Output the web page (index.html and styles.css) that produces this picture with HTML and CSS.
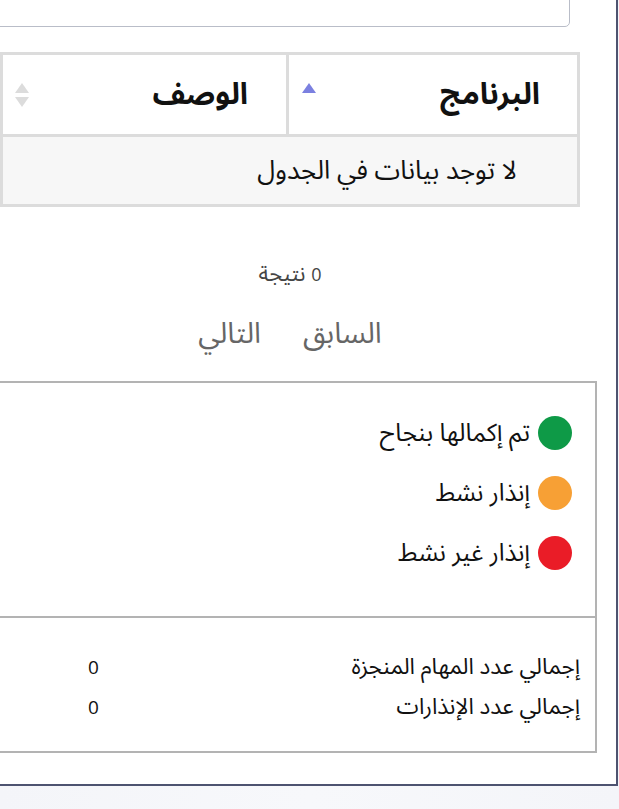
FILE: index.html
```html
<!DOCTYPE html>
<html lang="ar" dir="rtl">
<head>
<meta charset="utf-8">
<link rel="stylesheet" href="styles.css">
</head>
<body>
<div class="card">
  <div class="search-box"></div>
  <div class="table-wrap">
    <table class="data-table">
      <thead>
        <tr>
          <th class="col-program"><div class="th-inner"><span>البرنامج</span>
            <svg class="sort" width="16" height="26" viewBox="0 0 16 26"><path d="M8 1 L15 11 L1 11 Z" fill="#7b80e0"/></svg></div></th>
          <th class="col-desc"><div class="th-inner"><span>الوصف</span>
            <svg class="sort" width="16" height="26" viewBox="0 0 16 26"><path d="M8 1 L15 11 L1 11 Z" fill="#dcdcdc"/><path d="M8 25 L15 15 L1 15 Z" fill="#dcdcdc"/></svg></div></th>
        </tr>
      </thead>
      <tbody>
        <tr><td colspan="2" class="empty">لا توجد بيانات في الجدول</td></tr>
      </tbody>
    </table>
    <div class="info"><span class="num">0</span> نتيجة</div>
    <div class="pager"><span>السابق</span><span>التالي</span></div>
  </div>
  <div class="summary">
    <div class="legend">
      <div class="legend-item"><span class="dot green"></span><span>تم إكمالها بنجاح</span></div>
      <div class="legend-item"><span class="dot orange"></span><span>إنذار نشط</span></div>
      <div class="legend-item"><span class="dot red"></span><span>إنذار غير نشط</span></div>
    </div>
    <div class="totals">
      <div class="total-row"><span>إجمالي عدد المهام المنجزة</span><span class="num">0</span></div>
      <div class="total-row"><span>إجمالي عدد الإنذارات</span><span class="num">0</span></div>
    </div>
  </div>
</div>
</body>
</html>
```
FILE: styles.css
```css
html, body {
  margin: 0;
  padding: 0;
}
body {
  background: linear-gradient(90deg, #f4f5f9, #f7f8fb 50%, #f4f5f9);
  overflow: hidden;
  font-family: "Noto Sans Arabic", "Noto Sans", "DejaVu Sans", sans-serif;
  color: #111;
}
.card {
  background: #fff;
  border-right: 2px solid #4d5370;
  border-bottom: 2px solid #4d5370;
  margin-right: 1px;
  margin-left: -10px;
  padding-bottom: 31px;
}
.search-box {
  height: 47px;
  margin-top: -20px;
  margin-right: 46px;
  border: 1.5px solid #b9bdc8;
  border-radius: 5px;
  box-sizing: border-box;
}
.table-wrap {
  margin-top: 25px;
  margin-right: 36px;
  margin-left: 10px;
}
.data-table {
  width: 100%;
  border-collapse: separate;
  border-spacing: 0;
  border: 3px solid #dcdcdc;
}
.data-table th {
  height: 79px;
  padding: 0;
  border-bottom: 3px solid #dcdcdc;
  font-size: 30px;
  line-height: 40px;
  font-weight: 700;
  text-align: right;
  vertical-align: middle;
  background: #fff;
}
.col-program {
  width: 288px;
  border-left: 3px solid #dcdcdc;
}
.th-inner {
  display: flex;
  align-items: center;
  justify-content: space-between;
}
.col-program .th-inner {
  padding: 0 37px 0 12px;
}
.col-desc .th-inner {
  padding: 0 38px 0 11px;
}
.sort {
  display: block;
}
.empty {
  height: 67px;
  padding: 0 60px 0 0;
  background: #f7f7f7;
  font-size: 26px;
  line-height: 36px;
  text-align: right;
  vertical-align: middle;
}
.info {
  margin-top: 54px;
  font-size: 22px;
  line-height: 26px;
  color: #444;
  text-align: center;
}
.info .num {
  font-size: 18px;
}
.pager {
  margin-top: 30px;
  display: flex;
  justify-content: center;
  gap: 42px;
  font-size: 29px;
  line-height: 34px;
  color: #666;
}
.summary {
  margin-top: 30px;
  margin-right: 19px;
  border: 2px solid #b3b3b3;
}
.legend {
  padding: 33px 23px 46px 0;
  display: flex;
  flex-direction: column;
  gap: 26px;
}
.legend-item {
  display: flex;
  align-items: center;
  gap: 8px;
  font-size: 24.5px;
  line-height: 34px;
}
.dot {
  width: 34px;
  height: 34px;
  border-radius: 50%;
  flex: none;
}
.green { background: #0e9a47; }
.orange { background: #f7a035; }
.red { background: #ea1c27; }
.totals {
  border-top: 2px solid #b3b3b3;
  padding: 29px 15px 24px 96px;
}
.total-row {
  display: flex;
  justify-content: space-between;
  font-size: 22.5px;
  line-height: 40px;
}
.total-row .num {
  font-size: 19px;
}
.num {
  font-family: "Open Sans", "Noto Sans", sans-serif;
}
```
